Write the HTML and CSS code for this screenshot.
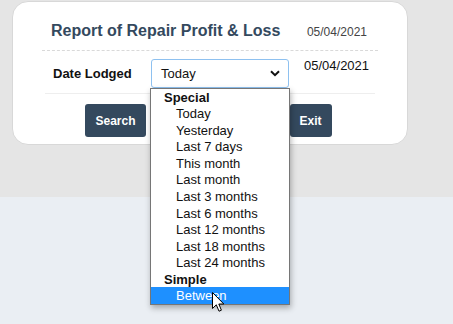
FILE: index.html
```html
<!DOCTYPE html>
<html>
<head>
<meta charset="utf-8">
<link rel="stylesheet" href="styles.css">
</head>
<body>
<div class="top">
  <div class="card">
    <div class="head">
      <span class="title">Report of Repair Profit &amp; Loss</span>
      <span class="hdate">05/04/2021</span>
    </div>
    <div class="form-row">
      <span class="label">Date Lodged</span>
      <div class="select">
        <span>Today</span>
        <svg class="chev" width="10" height="7" viewBox="0 0 10 7"><path d="M1 1.2 L5 5.2 L9 1.2" fill="none" stroke="#111" stroke-width="2"/></svg>
      </div>
      <span class="fdate">05/04/2021</span>
    </div>
    <div class="buttons">
      <button class="btn search">Search</button>
      <button class="btn middle" aria-label="Print"></button>
      <button class="btn exit">Exit</button>
    </div>
  </div>
</div>
<div class="dropdown">
  <div class="grp">Special</div>
  <div class="opt">Today</div>
  <div class="opt">Yesterday</div>
  <div class="opt">Last 7 days</div>
  <div class="opt">This month</div>
  <div class="opt">Last month</div>
  <div class="opt">Last 3 months</div>
  <div class="opt">Last 6 months</div>
  <div class="opt">Last 12 months</div>
  <div class="opt">Last 18 months</div>
  <div class="opt">Last 24 months</div>
  <div class="grp">Simple</div>
  <div class="opt sel">Between</div>
</div>
<svg class="cursor" width="13" height="21" viewBox="0 0 13 21"><path d="M0.5 0.5 L0.5 16.5 L4.3 12.8 L7 19.2 L9.4 18.2 L6.8 12 L11.8 12 Z" fill="#fff" stroke="#000" stroke-width="1" stroke-linejoin="round"/></svg>
</body>
</html>
```
FILE: styles.css
```css
html, body {
  margin: 0;
  padding: 0;
}
body {
  background: #eaeef3;
  font-family: "Liberation Sans", Arial, sans-serif;
  width: 453px;
  height: 324px;
  overflow: hidden;
  position: relative;
}
.top {
  background: #e5e5e5;
  height: 197px;
  padding-top: 1px;
  box-sizing: border-box;
}
.card {
  margin-left: 12px;
  width: 396px;
  height: 144px;
  box-sizing: border-box;
  background: #fff;
  border: 1px solid #d8d8d8;
  border-radius: 16px;
  padding: 0 29px;
}
.head {
  display: flex;
  justify-content: space-between;
  align-items: baseline;
  padding: 19px 11px 8px 9px;
  border-bottom: 1px dashed #d9d9d9;
  line-height: 20px;
}
.title {
  font-size: 16px;
  font-weight: bold;
  color: #34495e;
}
.hdate {
  font-size: 12px;
  color: #444;
}
.form-row {
  display: flex;
  align-items: flex-start;
  margin: 0 3px;
  padding: 8px 0 5px 8px;
  border-bottom: 1px solid #eeeeee;
}
.label {
  font-size: 13px;
  font-weight: bold;
  color: #111;
  width: 98px;
  line-height: 29px;
}
.select {
  width: 138px;
  height: 29px;
  box-sizing: border-box;
  border: 1px solid #8ec1f0;
  border-radius: 3px;
  display: flex;
  align-items: center;
  justify-content: space-between;
  padding: 0 8px 0 9px;
  font-size: 13px;
  color: #111;
}
.chev {
  display: block;
}
.fdate {
  font-size: 13px;
  color: #111;
  margin-left: 15px;
  line-height: 13px;
}
.buttons {
  display: flex;
  justify-content: center;
  gap: 4px;
  margin-top: 10px;
  padding-right: 3px;
}
.btn {
  height: 33px;
  background: #34495e;
  color: #fff;
  border: none;
  border-radius: 3px;
  font-family: "Liberation Sans", Arial, sans-serif;
  font-size: 12px;
  font-weight: bold;
  padding: 0 10px;
}
.middle {
  width: 136px;
}
.dropdown {
  position: absolute;
  left: 150px;
  top: 88px;
  width: 140px;
  height: 217px;
  box-sizing: border-box;
  background: #fff;
  border: 1px solid #767676;
  box-shadow: 1px 3px 6px rgba(0, 0, 0, 0.3);
  display: grid;
  grid-template-rows: repeat(13, 1fr);
  font-size: 13px;
  color: #111;
}
.grp {
  font-weight: bold;
  padding-left: 13px;
  display: flex;
  align-items: center;
}
.opt {
  padding-left: 25px;
  display: flex;
  align-items: center;
}
.opt.sel {
  background: #1e90ff;
  color: #fff;
}
.cursor {
  position: absolute;
  left: 212px;
  top: 292px;
}
```
